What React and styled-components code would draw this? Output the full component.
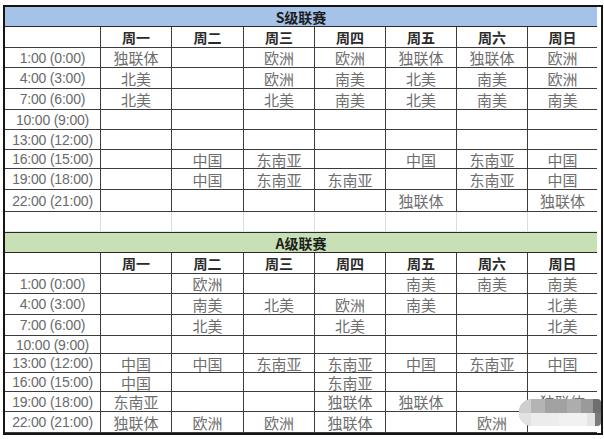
import React from 'react';
import styled, { createGlobalStyle } from 'styled-components';

const GlobalStyle = createGlobalStyle`
  html, body {
    margin: 0;
    padding: 0;
    background: #ffffff;
  }
`;

const Wrapper = styled.div`
  position: relative;
  width: 604px;
  height: 439px;
  padding: 5px 0 0 3px;
  box-sizing: border-box;
  overflow: hidden;
`;

const Sheet = styled.div`
  display: grid;
  grid-template-columns: 96px 71px 72px 71px 71px 71px 71px 69px;
  width: 596px;
  border: 2px solid #151515;
  box-sizing: content-box;
  font-family: "Noto Sans CJK SC", "Liberation Sans", sans-serif;
`;

const TitleBar = styled.div`
  grid-column: 1 / -1;
  height: ${(p) => p.$h}px;
  box-sizing: border-box;
  background: ${(p) => (p.$tone === 'green' ? '#c7e0b5' : '#a5c3e8')};
  border-bottom: 1px solid #2a2a2a;
  border-top: ${(p) => (p.$tone === 'green' ? '1px solid #2a2a2a' : 'none')};
  display: flex;
  align-items: center;
  justify-content: center;
  font-size: 14px;
  font-weight: 700;
  color: #1c1c1c;
  line-height: 1;
`;

const Cell = styled.div`
  height: ${(p) => p.$h}px;
  box-sizing: border-box;
  border-right: ${(p) => (p.$last ? 'none' : `1px solid ${p.$faint ? '#dcdcdc' : '#3c3c3c'}`)};
  border-bottom: 1px solid ${(p) => (p.$faint ? '#e6e6e6' : '#3c3c3c')};
  display: flex;
  align-items: center;
  justify-content: center;
  white-space: nowrap;
  line-height: 1;
`;

const TimeCell = styled(Cell)`
  font-family: "Liberation Sans", Arial, sans-serif;
  font-size: 14px;
  color: #6a6a6a;
  letter-spacing: -0.2px;
`;

const DayCell = styled(Cell)`
  font-size: 14px;
  font-weight: 700;
  color: #2a2a2a;
`;

const RegionCell = styled(Cell)`
  font-size: 15px;
  color: #6e6e6e;
`;

/* blurred watermark patch lying over the bottom-right cells */
const Smudge = styled.div`
  position: absolute;
  z-index: 5;
  left: 519px;
  top: 399px;
  width: 82px;
  height: 27px;
  display: flex;
  flex-direction: column;
  border-radius: 13px 4px 4px 13px;
  overflow: hidden;
  background: #bdbdbd;
`;

const SmudgeBand = styled.div`
  flex: 1;
  display: flex;
`;

const SmudgeTile = styled.div`
  flex: ${(p) => p.$w};
  background: ${(p) => p.$c};
`;

const topTiles = [
  [12, '#cfcfcf'],
  [14, '#b4b4b4'],
  [22, '#a2a2a2'],
  [14, '#adadad'],
  [12, '#9a9a9a'],
  [8, '#6f6f6f'],
];
const bottomTiles = [
  [12, '#e2e2e2'],
  [28, '#ececec'],
  [28, '#f1f1f1'],
  [8, '#e4e4e4'],
  [6, '#7a7a7a'],
];

const days = ['周一', '周二', '周三', '周四', '周五', '周六', '周日'];

const sections = [
  {
    title: 'S级联赛',
    tone: 'blue',
    titleH: 20,
    headH: 21,
    rows: [
      { time: '1:00 (0:00)', h: 20, v: ['独联体', '', '欧洲', '欧洲', '独联体', '独联体', '欧洲'] },
      { time: '4:00 (3:00)', h: 21, v: ['北美', '', '欧洲', '南美', '北美', '南美', '欧洲'] },
      { time: '7:00 (6:00)', h: 21, v: ['北美', '', '北美', '南美', '北美', '南美', '南美'] },
      { time: '10:00 (9:00)', h: 20, v: ['', '', '', '', '', '', ''] },
      { time: '13:00 (12:00)', h: 20, v: ['', '', '', '', '', '', ''] },
      { time: '16:00 (15:00)', h: 19, v: ['', '中国', '东南亚', '', '中国', '东南亚', '中国'] },
      { time: '19:00 (18:00)', h: 21, v: ['', '中国', '东南亚', '东南亚', '', '东南亚', '中国'] },
      { time: '22:00 (21:00)', h: 22, v: ['', '', '', '', '独联体', '', '独联体'] },
    ],
    spacer: 20,
  },
  {
    title: 'A级联赛',
    tone: 'green',
    titleH: 21,
    headH: 21,
    rows: [
      { time: '1:00 (0:00)', h: 20, v: ['', '欧洲', '', '', '南美', '南美', '南美'] },
      { time: '4:00 (3:00)', h: 21, v: ['', '南美', '北美', '欧洲', '南美', '', '北美'] },
      { time: '7:00 (6:00)', h: 21, v: ['', '北美', '', '北美', '', '', '北美'] },
      { time: '10:00 (9:00)', h: 18, v: ['', '', '', '', '', '', ''] },
      { time: '13:00 (12:00)', h: 19, v: ['中国', '中国', '东南亚', '东南亚', '中国', '东南亚', '中国'] },
      { time: '16:00 (15:00)', h: 19, v: ['中国', '', '', '东南亚', '', '', ''] },
      { time: '19:00 (18:00)', h: 20, v: ['东南亚', '', '', '独联体', '独联体', '', '独联体'] },
      { time: '22:00 (21:00)', h: 22, v: ['独联体', '欧洲', '欧洲', '独联体', '', '欧洲', ''] },
    ],
  },
];

const Section = ({ s, isLast }) => (
  <>
    <TitleBar $tone={s.tone} $h={s.titleH}>{s.title}</TitleBar>
    <DayCell $h={s.headH} />
    {days.map((d, i) => (
      <DayCell key={d} $h={s.headH} $last={i === 6}>{d}</DayCell>
    ))}
    {s.rows.map((r, ri) => {
      const lastRow = isLast && ri === s.rows.length - 1;
      return (
        <React.Fragment key={r.time}>
          <TimeCell $h={lastRow ? r.h - 1 : r.h}>{r.time}</TimeCell>
          {r.v.map((t, i) => (
            <RegionCell key={i} $h={lastRow ? r.h - 1 : r.h} $last={i === 6}>{t}</RegionCell>
          ))}
        </React.Fragment>
      );
    })}
    {s.spacer &&
      Array.from({ length: 8 }).map((_, i) => (
        <Cell key={`sp${i}`} $h={s.spacer} $faint $last={i === 7} />
      ))}
  </>
);

export default function App() {
  return (
    <>
      <GlobalStyle />
      <Wrapper>
        <Sheet>
          {sections.map((s, i) => (
            <Section key={s.title} s={s} isLast={i === sections.length - 1} />
          ))}
        </Sheet>
        <Smudge>
          <SmudgeBand>
            {topTiles.map(([w, c], i) => (
              <SmudgeTile key={i} $w={w} $c={c} />
            ))}
          </SmudgeBand>
          <SmudgeBand>
            {bottomTiles.map(([w, c], i) => (
              <SmudgeTile key={i} $w={w} $c={c} />
            ))}
          </SmudgeBand>
        </Smudge>
      </Wrapper>
    </>
  );
}
